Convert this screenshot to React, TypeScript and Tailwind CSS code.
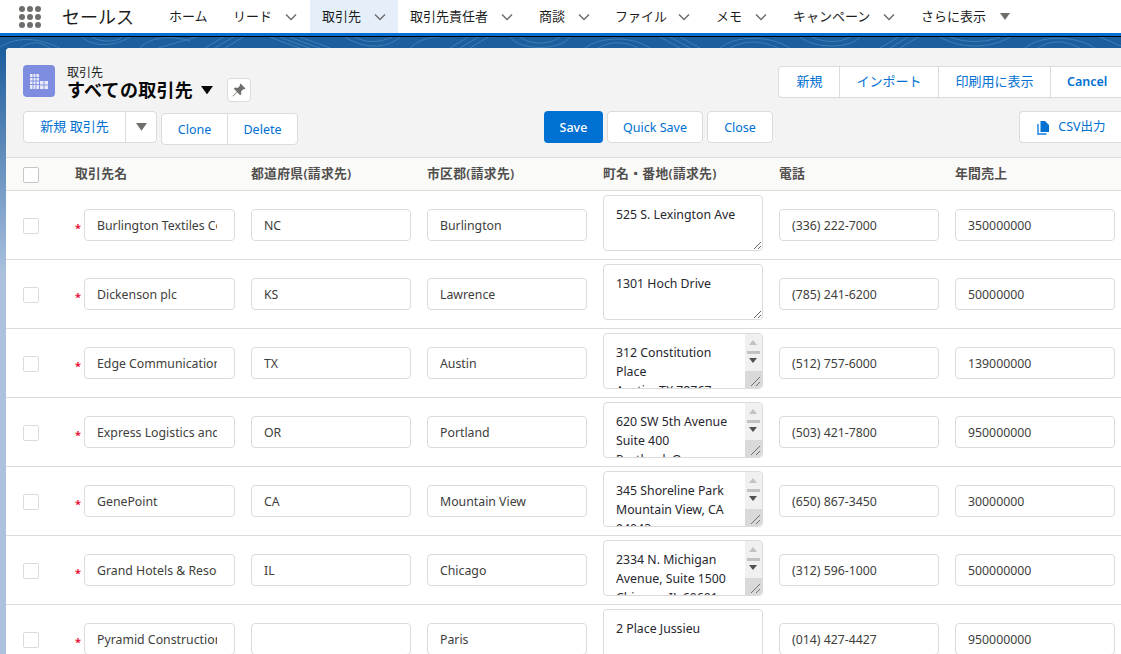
import React from "react";

const FONT = "font-['Noto_Sans','Noto_Sans_CJK_JP',sans-serif]";

const Chevron = () => (
  <svg width="14" height="14" viewBox="0 0 14 14" className="shrink-0" fill="none" stroke="#706e6b" strokeWidth="1.5">
    <path d="M2 4.5 L7 9.5 L12 4.5" />
  </svg>
);
const Caret = ({ color = "#706e6b", w = 10 }: { color?: string; w?: number }) => (
  <svg width={w} height={w * 0.7} viewBox="0 0 10 7" className="shrink-0">
    <path d="M0 0 H10 L5 7 Z" fill={color} />
  </svg>
);

const navItems: { t: string; w: number; active?: boolean; gap: number }[] = [
  { t: "リード", w: 89, gap: 12 },
  { t: "取引先", w: 88, active: true, gap: 12 },
  { t: "取引先責任者", w: 129, gap: 12 },
  { t: "商談", w: 76, gap: 12 },
  { t: "ファイル", w: 101, gap: 10 },
  { t: "メモ", w: 77, gap: 12 },
  { t: "キャンペーン", w: 128, gap: 12 },
];

const columns = ["取引先名", "都道府県(請求先)", "市区郡(請求先)", "町名・番地(請求先)", "電話", "年間売上"];

const rows = [
  { name: "Burlington Textiles Corp of America", st: "NC", city: "Burlington", addr: "525 S. Lexington Ave", tel: "(336) 222-7000", rev: "350000000", sb: false },
  { name: "Dickenson plc", st: "KS", city: "Lawrence", addr: "1301 Hoch Drive", tel: "(785) 241-6200", rev: "50000000", sb: false },
  { name: "Edge Communications", st: "TX", city: "Austin", addr: "312 Constitution\nPlace\nAustin, TX 78767\nUSA", tel: "(512) 757-6000", rev: "139000000", sb: true },
  { name: "Express Logistics and Transport", st: "OR", city: "Portland", addr: "620 SW 5th Avenue\nSuite 400\nPortland, Oregon\nUSA", tel: "(503) 421-7800", rev: "950000000", sb: true },
  { name: "GenePoint", st: "CA", city: "Mountain View", addr: "345 Shoreline Park\nMountain View, CA\n94043\nUSA", tel: "(650) 867-3450", rev: "30000000", sb: true },
  { name: "Grand Hotels & Resorts Ltd", st: "IL", city: "Chicago", addr: "2334 N. Michigan\nAvenue, Suite 1500\nChicago, IL 60601\nUSA", tel: "(312) 596-1000", rev: "500000000", sb: true },
  { name: "Pyramid Construction Inc.", st: "", city: "Paris", addr: "2 Place Jussieu", tel: "(014) 427-4427", rev: "950000000", sb: false },
];

const inputCls =
  "w-[160px] h-[32px] rounded-[4px] border border-[#dddbda] bg-white pl-3 text-[12.3px] text-[#3e3e3c] outline-none";

const btn =
  "h-[32px] pt-[3px] border border-[#dddbda] bg-white text-[12.5px] text-[#0070d2] flex items-center justify-center";

const Scrollbar = () => (
  <div className="absolute right-px top-px bottom-px w-[17px] flex flex-col rounded-r-[4px] overflow-hidden pointer-events-none">
    <div className="h-[37px] bg-[#f0f0f0] flex flex-col items-center">
      <svg width="9" height="6" viewBox="0 0 9 6" className="mt-[6px]"><path d="M0 5 H8 L4 0 Z" fill="#c2c2c2" /></svg>
      <div className="mt-[5px] w-[13px] h-[3px] bg-[#c2c2c2]" />
      <svg width="9" height="6" viewBox="0 0 9 6" className="mt-[4px]"><path d="M0 0 H8 L4 5 Z" fill="#505050" /></svg>
    </div>
    <div className="flex-1 bg-[#d9d9d9]" />
  </div>
);

export default function App() {
  return (
    <div className={`${FONT} w-[1121px] h-[654px] overflow-hidden bg-gradient-to-b from-[#1b5f9e] from-[8%] to-[#abc1de] to-[42%]`}>
      {/* Global nav */}
      <header className="h-[33px] bg-white flex items-center">
        <div className="w-[62px] pl-[19px] shrink-0">
          <div className="grid grid-cols-3 gap-[2px] w-[22px]">
            {Array.from({ length: 9 }).map((_, i) => (
              <span key={i} className="w-[6px] h-[6px] rounded-full bg-[#706e6b]" />
            ))}
          </div>
        </div>
        <div className="w-[95px] shrink-0 text-[18px] leading-none text-[#1c1c1c]">セールス</div>
        <div className="w-[64px] shrink-0 pl-3 text-[13px] text-[#1c1c1c]">ホーム</div>
        {navItems.map((n) => (
          <div
            key={n.t}
            style={{ width: n.w, gap: n.gap }}
            className={`h-[33px] shrink-0 pl-3 flex items-center text-[13px] text-[#1c1c1c] ${n.active ? "bg-[#e5eff9]" : ""}`}
          >
            <span>{n.t}</span>
            <Chevron />
          </div>
        ))}
        <div className="pl-3 flex items-center gap-[14px] text-[13px] text-[#1c1c1c]">
          <span>さらに表示</span>
          <Caret />
        </div>
      </header>
      <div className="h-[3px] bg-[#0070d2]" />
      <div className="h-px bg-black" />

      {/* Contour band */}
      <div className="h-[11px] overflow-hidden bg-[#1b5f9e]">
        <svg width="1121" height="11" viewBox="0 0 1121 11" fill="none" stroke="#3f7db5" strokeWidth="1">
          <path d="M0 10 C20 -2 40 2 60 11 M20 11 C30 4 40 4 50 11 M82 0 C90 8 110 12 130 0 M92 0 C100 5 115 6 122 0 M140 11 C150 0 170 -2 190 4 M158 11 L200 -1 M205 11 L225 -1 M215 11 L235 -1 M225 11 L245 -1 M270 0 C280 4 290 8 300 11 M280 0 C290 4 300 8 310 11 M290 0 C300 4 310 8 320 11 M300 0 L330 11 M345 0 C360 10 385 14 400 0 M355 0 C365 6 380 6 392 0 M410 11 C420 2 430 0 440 0 M450 11 L470 -1 M460 11 L480 -1 M470 11 L490 -1 M510 0 C520 14 560 14 570 0 M520 0 C530 8 550 8 560 0 M585 11 C600 0 630 -2 650 11 M598 11 C610 4 625 4 638 11 M660 0 L680 11 M670 0 L690 11 M680 0 L700 11 M720 11 C735 -2 770 -2 790 11 M730 11 C745 3 760 3 778 11 M800 0 C815 12 850 12 860 0 M812 0 C825 6 840 6 850 0 M880 11 L900 -1 M890 11 L910 -1 M900 11 L920 -1 M940 0 C960 12 990 12 1010 0 M950 0 C965 6 985 6 1000 0 M1025 11 C1040 -2 1075 -2 1095 11 M1038 11 C1050 3 1065 3 1080 11 M1100 0 L1121 9" />
        </svg>
      </div>

      {/* Card */}
      <main className="ml-[6px] w-[1115px] h-[606px] rounded-tl-[4px] overflow-hidden bg-white">
        {/* Page header */}
        <section className="h-[110px] bg-[#f3f3f3] border-b border-[#dddbda] pl-[17px] flex flex-col">
          <div className="h-[63px] flex items-start">
            <div className="mt-[17px] w-[32px] h-[32px] rounded-[4px] bg-[#7f8de1] flex items-center justify-center shrink-0">
              <svg width="18" height="15" viewBox="0 0 18 15">
                <rect x="0" y="0" width="9" height="15" fill="#e9ebfa" />
                <rect x="10" y="7" width="8" height="8" fill="#e9ebfa" />
                <path d="M3 0V15M6 0V15M0 3.5H9M0 7H9M0 10.5H9M14 7V15M10 11H18" stroke="#7f8de1" strokeWidth="0.9" />
              </svg>
            </div>
            <div className="ml-[12px] mt-[17px] flex flex-col shrink-0">
              <span className="text-[12px] leading-[16px] text-[#1c1c1c]">取引先</span>
              <span className="text-[18px] leading-[18px] font-bold tracking-[0.3px] text-[#080707] flex items-center">
                すべての取引先
                <span className="ml-2"><Caret color="#080707" w={12} /></span>
              </span>
            </div>
            <div className="ml-[14px] mt-[30px] w-[24px] h-[24px] bg-white border border-[#dddbda] rounded-[4px] flex items-center justify-center shrink-0">
              <svg width="14" height="14" viewBox="0 0 14 14">
                <path d="M8.5 0.5 L13.5 5.5 L12.5 6.3 L11.5 5.9 L9 8.4 L9.4 11 L8.2 12.2 L5.2 9.2 L1 13.4 L0.6 13 L4.8 8.8 L1.8 5.8 L3 4.6 L5.6 5 L8.1 2.5 L7.7 1.5 Z" fill="#706e6b" />
              </svg>
            </div>
            <div className="ml-auto mt-[18px] flex h-[32px] bg-white border border-[#dddbda] rounded-l-[4px] border-r-0 text-[13px] text-[#0070d2]">
              <span className="w-[61px] pl-px flex items-center justify-center border-r border-[#dddbda]">新規</span>
              <span className="w-[99px] flex items-center justify-center border-r border-[#dddbda]">インポート</span>
              <span className="w-[112px] flex items-center justify-center border-r border-[#dddbda]">印刷用に表示</span>
              <span className="w-[70px] pl-[16px] pt-px flex items-center text-[12.5px] font-semibold">Cancel</span>
            </div>
          </div>
          <div className="flex items-start">
            <div className="flex h-[32px] bg-white border border-[#dddbda] rounded-[4px] text-[13px] text-[#0070d2] w-[134px] shrink-0">
              <span className="w-[102px] flex items-center justify-center border-r border-[#dddbda]">新規 取引先</span>
              <span className="flex-1 flex items-center justify-center"><Caret w={11} /></span>
            </div>
            <div className="flex mt-[2px] ml-[4px] shrink-0">
              <div className={`${btn} w-[67px] rounded-l-[4px]`}>Clone</div>
              <div className={`${btn} w-[71px] -ml-px rounded-r-[4px]`}>Delete</div>
            </div>
            <div className="ml-[246px] flex gap-[4px] shrink-0">
              <div className="w-[59px] h-[32px] pt-[3px] rounded-[4px] bg-[#0070d2] text-white text-[12.5px] font-medium flex items-center justify-center">Save</div>
              <div className={`${btn} w-[96px] rounded-[4px]`}>Quick Save</div>
              <div className={`${btn} w-[66px] rounded-[4px]`}>Close</div>
            </div>
            <div className={`${btn} ml-auto w-[102px] pl-[2px] !pt-px rounded-l-[4px] border-r-0 gap-[9px] shrink-0`}>
              <svg width="12" height="14" viewBox="0 0 12 14">
                <path d="M3.5 0 H8 L12 4 V11 H3.5 Z" fill="#0070d2" />
                <path d="M1 3 V13 H9.5" fill="none" stroke="#4a9ae8" strokeWidth="1.8" />
              </svg>
              <span>CSV出力</span>
            </div>
          </div>
        </section>

        {/* Table */}
        <section>
          <div className="h-[33px] bg-[#fafaf9] border-b border-[#dddbda] flex items-center">
            <div className="w-[69px] pl-[17px] shrink-0">
              <div className="w-[16px] h-[16px] mt-px bg-white border border-[#c9c7c5] rounded-[2px]" />
            </div>
            {columns.map((c) => (
              <div key={c} className="w-[176px] shrink-0 text-[12.8px] font-semibold tracking-[0.3px] text-[#514f4d]">{c}</div>
            ))}
          </div>
          {rows.map((r) => (
            <div key={r.name} className="h-[69px] border-b border-[#dddbda] flex items-center">
              <div className="w-[69px] pl-[17px] shrink-0">
                <div className="w-[16px] h-[16px] mt-[1px] bg-white border border-[#dddbda] rounded-[2px]" />
              </div>
              <div className="w-[176px] shrink-0 flex items-center">
                <span className="w-[9px] mt-[5px] text-[11px] leading-none text-[#e8123a] font-bold shrink-0">*</span>
                <input readOnly defaultValue={r.name} className={`${inputCls} !w-[151px] pr-[17px]`} />
              </div>
              <div className="w-[176px] shrink-0"><input readOnly defaultValue={r.st} className={inputCls} /></div>
              <div className="w-[176px] shrink-0"><input readOnly defaultValue={r.city} className={inputCls} /></div>
              <div className="w-[176px] shrink-0">
                <div className="relative w-[160px] h-[56px] mb-[4px]">
                  <textarea
                    readOnly
                    defaultValue={r.addr}
                    className="block w-[160px] h-[56px] resize overflow-hidden rounded-[4px] border border-[#dddbda] bg-white pl-3 pr-[20px] pt-[9px] text-[12.3px] leading-[19px] text-[#26262e] outline-none"
                  />
                  {r.sb && <Scrollbar />}
                  {r.sb && (
                    <svg width="12" height="12" viewBox="0 0 12 12" className="absolute right-[2px] bottom-[2px]" stroke="#555" strokeWidth="0.8">
                      <path d="M2 11 L11 2 M7 11 L11 7" />
                    </svg>
                  )}
                </div>
              </div>
              <div className="w-[176px] shrink-0"><input readOnly defaultValue={r.tel} className={inputCls} /></div>
              <div className="w-[166px] shrink-0"><input readOnly defaultValue={r.rev} className={inputCls} /></div>
            </div>
          ))}
        </section>
      </main>
    </div>
  );
}
